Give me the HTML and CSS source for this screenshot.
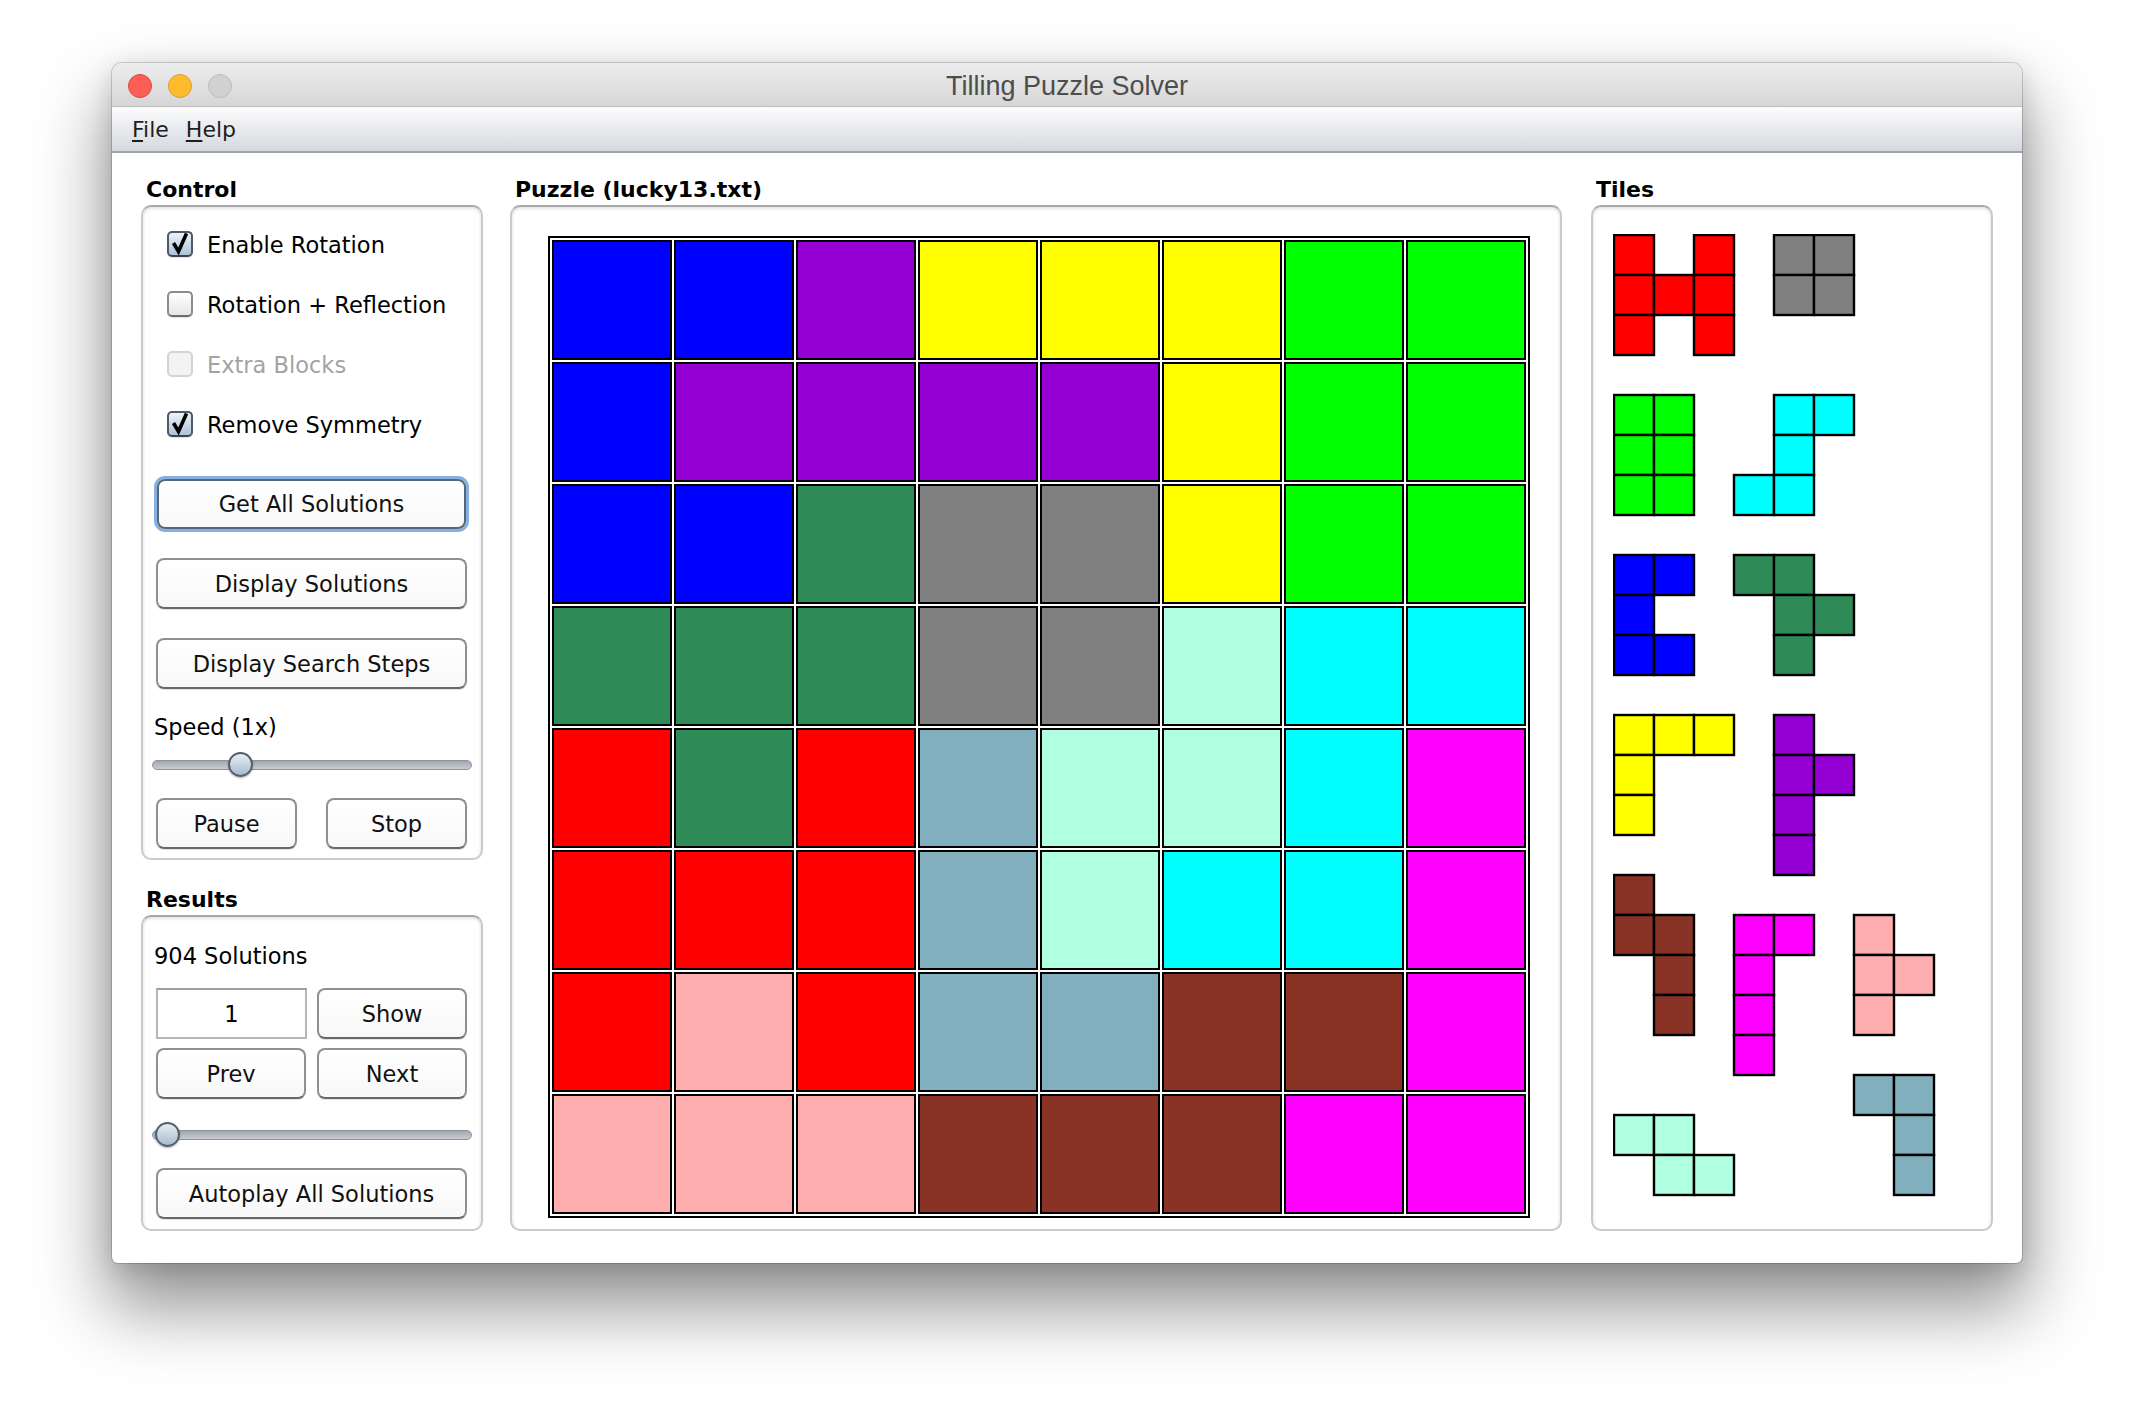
FILE: index.html
```html
<!DOCTYPE html>
<html>
<head>
<meta charset="utf-8">
<title>Tilling Puzzle Solver</title>
<link rel="stylesheet" href="styles.css">
</head>
<body>
<div class="desktop">
  <div class="window">
    <div class="titlebar">
      <div class="lights">
        <span class="light light-close"></span>
        <span class="light light-min"></span>
        <span class="light light-max"></span>
      </div>
      <div class="title">Tilling Puzzle Solver</div>
      <div class="spacer"></div>
    </div>
    <div class="menubar">
      <span class="menu menu-file"><u>F</u>ile</span>
      <span class="menu"><u>H</u>elp</span>
    </div>
    <div class="content">
      <div class="col col-left">
        <div class="group-label">Control</div>
        <div class="group control">
          <div class="check">
            <span class="box box-checked"><svg width="26" height="26" viewBox="0 0 26 26"><path d="M6.5 12 L11.5 20.5 L19.5 2.5" fill="none" stroke="#000" stroke-width="3.6" stroke-linejoin="miter"/></svg></span>
            <span>Enable Rotation</span>
          </div>
          <div class="check">
            <span class="box"></span>
            <span>Rotation + Reflection</span>
          </div>
          <div class="check check-disabled">
            <span class="box box-disabled"></span>
            <span>Extra Blocks</span>
          </div>
          <div class="check">
            <span class="box box-checked"><svg width="26" height="26" viewBox="0 0 26 26"><path d="M6.5 12 L11.5 20.5 L19.5 2.5" fill="none" stroke="#000" stroke-width="3.6" stroke-linejoin="miter"/></svg></span>
            <span>Remove Symmetry</span>
          </div>
          <div class="btn btn-focus btn-first">Get All Solutions</div>
          <div class="btn btn-gap">Display Solutions</div>
          <div class="btn btn-gap">Display Search Steps</div>
          <div class="plain-label speed-label">Speed (1x)</div>
          <div class="slider speed-slider">
            <div class="track"></div>
            <div class="thumb thumb-speed"></div>
          </div>
          <div class="btn-row pause-row">
            <div class="btn btn-half">Pause</div>
            <div class="btn btn-half">Stop</div>
          </div>
        </div>
        <div class="group-label results-label">Results</div>
        <div class="group results">
          <div class="plain-label">904 Solutions</div>
          <div class="btn-row field-row">
            <div class="field">1</div>
            <div class="btn btn-pair">Show</div>
          </div>
          <div class="btn-row nav-row">
            <div class="btn btn-pair">Prev</div>
            <div class="btn btn-pair">Next</div>
          </div>
          <div class="slider results-slider">
            <div class="track"></div>
            <div class="thumb thumb-results"></div>
          </div>
          <div class="btn autoplay">Autoplay All Solutions</div>
        </div>
      </div>

      <div class="col col-mid">
        <div class="group-label">Puzzle (lucky13.txt)</div>
        <div class="group puzzle">
          <div class="board">
            <div class="cell c-blue"></div><div class="cell c-blue"></div><div class="cell c-purple"></div><div class="cell c-yellow"></div><div class="cell c-yellow"></div><div class="cell c-yellow"></div><div class="cell c-green"></div><div class="cell c-green"></div>
            <div class="cell c-blue"></div><div class="cell c-purple"></div><div class="cell c-purple"></div><div class="cell c-purple"></div><div class="cell c-purple"></div><div class="cell c-yellow"></div><div class="cell c-green"></div><div class="cell c-green"></div>
            <div class="cell c-blue"></div><div class="cell c-blue"></div><div class="cell c-sea"></div><div class="cell c-gray"></div><div class="cell c-gray"></div><div class="cell c-yellow"></div><div class="cell c-green"></div><div class="cell c-green"></div>
            <div class="cell c-sea"></div><div class="cell c-sea"></div><div class="cell c-sea"></div><div class="cell c-gray"></div><div class="cell c-gray"></div><div class="cell c-aqua"></div><div class="cell c-cyan"></div><div class="cell c-cyan"></div>
            <div class="cell c-red"></div><div class="cell c-sea"></div><div class="cell c-red"></div><div class="cell c-steel"></div><div class="cell c-aqua"></div><div class="cell c-aqua"></div><div class="cell c-cyan"></div><div class="cell c-magenta"></div>
            <div class="cell c-red"></div><div class="cell c-red"></div><div class="cell c-red"></div><div class="cell c-steel"></div><div class="cell c-aqua"></div><div class="cell c-cyan"></div><div class="cell c-cyan"></div><div class="cell c-magenta"></div>
            <div class="cell c-red"></div><div class="cell c-pink"></div><div class="cell c-red"></div><div class="cell c-steel"></div><div class="cell c-steel"></div><div class="cell c-brown"></div><div class="cell c-brown"></div><div class="cell c-magenta"></div>
            <div class="cell c-pink"></div><div class="cell c-pink"></div><div class="cell c-pink"></div><div class="cell c-brown"></div><div class="cell c-brown"></div><div class="cell c-brown"></div><div class="cell c-magenta"></div><div class="cell c-magenta"></div>
          </div>
        </div>
      </div>

      <div class="col col-right">
        <div class="group-label">Tiles</div>
        <div class="group tiles">
          <svg class="tileset" width="324" height="964" viewBox="0 0 324 964">
            <g stroke="#000" stroke-width="2.4">
              <g fill="#ff0000">
                <rect x="1" y="1" width="40" height="40"/><rect x="81" y="1" width="40" height="40"/>
                <rect x="1" y="41" width="40" height="40"/><rect x="41" y="41" width="40" height="40"/><rect x="81" y="41" width="40" height="40"/>
                <rect x="1" y="81" width="40" height="40"/><rect x="81" y="81" width="40" height="40"/>
              </g>
              <g fill="#808080">
                <rect x="161" y="1" width="40" height="40"/><rect x="201" y="1" width="40" height="40"/>
                <rect x="161" y="41" width="40" height="40"/><rect x="201" y="41" width="40" height="40"/>
              </g>
              <g fill="#00ff00">
                <rect x="1" y="161" width="40" height="40"/><rect x="41" y="161" width="40" height="40"/>
                <rect x="1" y="201" width="40" height="40"/><rect x="41" y="201" width="40" height="40"/>
                <rect x="1" y="241" width="40" height="40"/><rect x="41" y="241" width="40" height="40"/>
              </g>
              <g fill="#00ffff">
                <rect x="161" y="161" width="40" height="40"/><rect x="201" y="161" width="40" height="40"/>
                <rect x="161" y="201" width="40" height="40"/>
                <rect x="121" y="241" width="40" height="40"/><rect x="161" y="241" width="40" height="40"/>
              </g>
              <g fill="#0000ff">
                <rect x="1" y="321" width="40" height="40"/><rect x="41" y="321" width="40" height="40"/>
                <rect x="1" y="361" width="40" height="40"/>
                <rect x="1" y="401" width="40" height="40"/><rect x="41" y="401" width="40" height="40"/>
              </g>
              <g fill="#2e8b57">
                <rect x="121" y="321" width="40" height="40"/><rect x="161" y="321" width="40" height="40"/>
                <rect x="161" y="361" width="40" height="40"/><rect x="201" y="361" width="40" height="40"/>
                <rect x="161" y="401" width="40" height="40"/>
              </g>
              <g fill="#ffff00">
                <rect x="1" y="481" width="40" height="40"/><rect x="41" y="481" width="40" height="40"/><rect x="81" y="481" width="40" height="40"/>
                <rect x="1" y="521" width="40" height="40"/>
                <rect x="1" y="561" width="40" height="40"/>
              </g>
              <g fill="#9400d3">
                <rect x="161" y="481" width="40" height="40"/>
                <rect x="161" y="521" width="40" height="40"/><rect x="201" y="521" width="40" height="40"/>
                <rect x="161" y="561" width="40" height="40"/>
                <rect x="161" y="601" width="40" height="40"/>
              </g>
              <g fill="#893326">
                <rect x="1" y="641" width="40" height="40"/>
                <rect x="1" y="681" width="40" height="40"/><rect x="41" y="681" width="40" height="40"/>
                <rect x="41" y="721" width="40" height="40"/>
                <rect x="41" y="761" width="40" height="40"/>
              </g>
              <g fill="#ff00ff">
                <rect x="121" y="681" width="40" height="40"/><rect x="161" y="681" width="40" height="40"/>
                <rect x="121" y="721" width="40" height="40"/>
                <rect x="121" y="761" width="40" height="40"/>
                <rect x="121" y="801" width="40" height="40"/>
              </g>
              <g fill="#ffaeb0">
                <rect x="241" y="681" width="40" height="40"/>
                <rect x="241" y="721" width="40" height="40"/><rect x="281" y="721" width="40" height="40"/>
                <rect x="241" y="761" width="40" height="40"/>
              </g>
              <g fill="#82afbe">
                <rect x="241" y="841" width="40" height="40"/><rect x="281" y="841" width="40" height="40"/>
                <rect x="281" y="881" width="40" height="40"/>
                <rect x="281" y="921" width="40" height="40"/>
              </g>
              <g fill="#b0ffe0">
                <rect x="1" y="881" width="40" height="40"/><rect x="41" y="881" width="40" height="40"/>
                <rect x="41" y="921" width="40" height="40"/><rect x="81" y="921" width="40" height="40"/>
              </g>
            </g>
          </svg>
        </div>
      </div>
    </div>
  </div>
</div>
</body>
</html>
```

FILE: styles.css
```css
html, body {
  margin: 0;
  padding: 0;
  background: #ffffff;
}

body {
  width: 2134px;
  height: 1424px;
  overflow: hidden;
  font-family: "DejaVu Sans", "Noto Sans", sans-serif;
  color: #000;
}

.desktop {
  padding: 63px 0 0 112px;
}

.window {
  width: 1910px;
  height: 1200px;
  border-radius: 10px 10px 6px 6px;
  background: #ffffff;
  box-shadow: 0 0 0 1px rgba(0, 0, 0, 0.16),
              0 40px 70px 6px rgba(0, 0, 0, 0.42),
              0 6px 24px rgba(0, 0, 0, 0.14);
  display: flex;
  flex-direction: column;
  overflow: hidden;
}

/* ---------- title bar ---------- */
.titlebar {
  height: 43px;
  border-bottom: 1px solid #bdbdbd;
  background: linear-gradient(#ededed, #d6d6d6);
  display: grid;
  grid-template-columns: 1fr auto 1fr;
  align-items: center;
}

.lights {
  display: flex;
  gap: 16px;
  padding-left: 16px;
  padding-top: 2px;
}

.light {
  width: 22px;
  height: 22px;
  border-radius: 50%;
  border: 1px solid;
}

.light-close { background: #fd5f57; border-color: #df4640; }
.light-min { background: #febb2e; border-color: #dc9f24; }
.light-max { background: #d1d1d1; border-color: #bcbcbc; }

.title {
  font-family: "Liberation Sans", Arial, sans-serif;
  font-size: 27px;
  color: #4d4d4d;
  padding-top: 4px;
}

/* ---------- menu bar ---------- */
.menubar {
  height: 44px;
  border-bottom: 2px solid #a0a3aa;
  background: linear-gradient(#fcfcfc, #d5d8df);
  display: flex;
  align-items: center;
  padding-left: 20px;
  font-size: 22px;
  color: #1e1e1e;
}

.menu u {
  text-decoration-thickness: 2px;
  text-underline-offset: 3px;
}

.menu-file {
  margin-right: 17px;
}

/* ---------- content ---------- */
.content {
  flex: 1;
  display: flex;
  padding: 24px 29px 32px 29px;
}

.col {
  display: flex;
  flex-direction: column;
}

.col-left { width: 342px; }
.col-mid { width: 1052px; margin-left: 27px; }
.col-right { width: 402px; margin-left: 29px; }

.group-label {
  font-weight: bold;
  font-size: 22px;
  line-height: 26px;
  height: 26px;
  margin: 0 0 2px 5px;
  white-space: nowrap;
}

.results-label {
  margin-top: 27px;
}

.group {
  box-sizing: border-box;
  border: 2px solid #cacaca;
  border-top-color: #a9a9a9;
  border-radius: 10px;
  background: #ffffff;
  box-shadow: inset 0 3px 3px -1px rgba(0, 0, 0, 0.10),
              inset 3px 0 3px -2px rgba(0, 0, 0, 0.07),
              inset -3px 0 3px -2px rgba(0, 0, 0, 0.07);
}

.control {
  display: flex;
  flex-direction: column;
  padding: 24px 14px 9px 13px;
}

.results {
  flex: 1;
  display: flex;
  flex-direction: column;
  padding: 26px 14px 0 13px;
}

.puzzle {
  flex: 1;
  padding: 29px 0 0 36px;
}

.tiles {
  flex: 1;
  padding: 27px 0 0 20px;
}

/* ---------- checkboxes ---------- */
.check {
  display: flex;
  align-items: center;
  gap: 14px;
  height: 26px;
  margin-left: 11px;
  margin-bottom: 34px;
  font-size: 22.5px;
  line-height: 26px;
  white-space: nowrap;
}

.check > span:last-child {
  padding-top: 2px;
}

.check:nth-child(4) {
  margin-bottom: 0;
}

.check-disabled {
  color: #a3a3a3;
}

.box {
  box-sizing: border-box;
  width: 26px;
  height: 26px;
  flex: none;
  border-radius: 5px;
  border: 2px solid #8c8c8c;
  border-bottom-color: #6d6d6d;
  background: linear-gradient(#ffffff, #e6e6e6);
  box-shadow: 0 1px 1px rgba(0, 0, 0, 0.12);
  position: relative;
}

.box svg {
  position: absolute;
  left: -2px;
  top: -2px;
}

.box-checked {
  border-color: #4e5a69;
  border-bottom-color: #3b4450;
  background: linear-gradient(#eef3f8, #aec2d8);
}

.box-disabled {
  border-color: #d4d4d4;
  background: #f3f3f3;
  box-shadow: none;
}

/* ---------- buttons ---------- */
.btn {
  box-sizing: border-box;
  height: 51px;
  display: flex;
  align-items: center;
  justify-content: center;
  border: 2px solid #909090;
  border-bottom-color: #686868;
  border-radius: 8px;
  background: linear-gradient(#ffffff, #f8f8f8);
  box-shadow: 0 1px 1px rgba(0, 0, 0, 0.12);
  font-size: 22.5px;
  color: #111;
  white-space: nowrap;
}

.btn-focus {
  height: 50px;
  margin: 42px 1px 0 1px;
  border-color: #56657a;
  box-shadow: 0 0 0 3px #86b0e2;
}

.btn-gap {
  margin-top: 29px;
}

.plain-label {
  font-size: 22.5px;
  line-height: 26px;
  height: 26px;
  margin-left: -2px;
  white-space: nowrap;
}

.speed-label {
  margin-top: 25px;
}

.btn-row {
  display: flex;
  justify-content: space-between;
}

.pause-row {
  margin-top: 20px;
}

.btn-half {
  width: 141px;
}

.field-row {
  margin-top: 19px;
}

.nav-row {
  margin-top: 9px;
}

.btn-pair {
  width: 150px;
}

.field {
  box-sizing: border-box;
  width: 151px;
  height: 51px;
  border: 2px solid #b6b6b6;
  border-top-color: #9d9d9d;
  background: #fff;
  display: flex;
  align-items: center;
  justify-content: center;
  font-size: 22.5px;
}

.autoplay {
  margin-top: 20px;
}

/* ---------- sliders ---------- */
.slider {
  position: relative;
  box-sizing: border-box;
  height: 26px;
  padding-top: 8px;
  margin: 12px -5px 0 -4px;
}

.results-slider {
  margin-top: 23px;
}

.track {
  box-sizing: border-box;
  height: 10px;
  border-radius: 5px;
  border: 1px solid #8e939b;
  background: linear-gradient(#a2a7b0, #c9cdd3);
}

.thumb {
  position: absolute;
  top: 0;
  box-sizing: border-box;
  width: 25px;
  height: 25px;
  border-radius: 50%;
  border: 2px solid #55606e;
  background: linear-gradient(#e6edf4, #a8bbcf);
  box-shadow: 0 1px 2px rgba(0, 0, 0, 0.3);
}

.thumb-speed { left: 76px; }
.thumb-results { left: 3px; }

/* ---------- board ---------- */
.board {
  display: grid;
  grid-template-columns: repeat(8, 120px);
  grid-auto-rows: 120px;
  gap: 2px;
  padding: 2px;
  border: 2px solid #000;
  background: #fff;
  width: max-content;
}

.cell {
  box-sizing: border-box;
  border: 2px solid #000;
}

.c-blue { background: #0000ff; }
.c-purple { background: #9400d3; }
.c-yellow { background: #ffff00; }
.c-green { background: #00ff00; }
.c-sea { background: #2e8b57; }
.c-gray { background: #808080; }
.c-aqua { background: #b0ffe0; }
.c-cyan { background: #00ffff; }
.c-red { background: #ff0000; }
.c-steel { background: #82afbe; }
.c-magenta { background: #ff00ff; }
.c-pink { background: #ffaeb0; }
.c-brown { background: #893326; }

.tileset {
  display: block;
}
```
